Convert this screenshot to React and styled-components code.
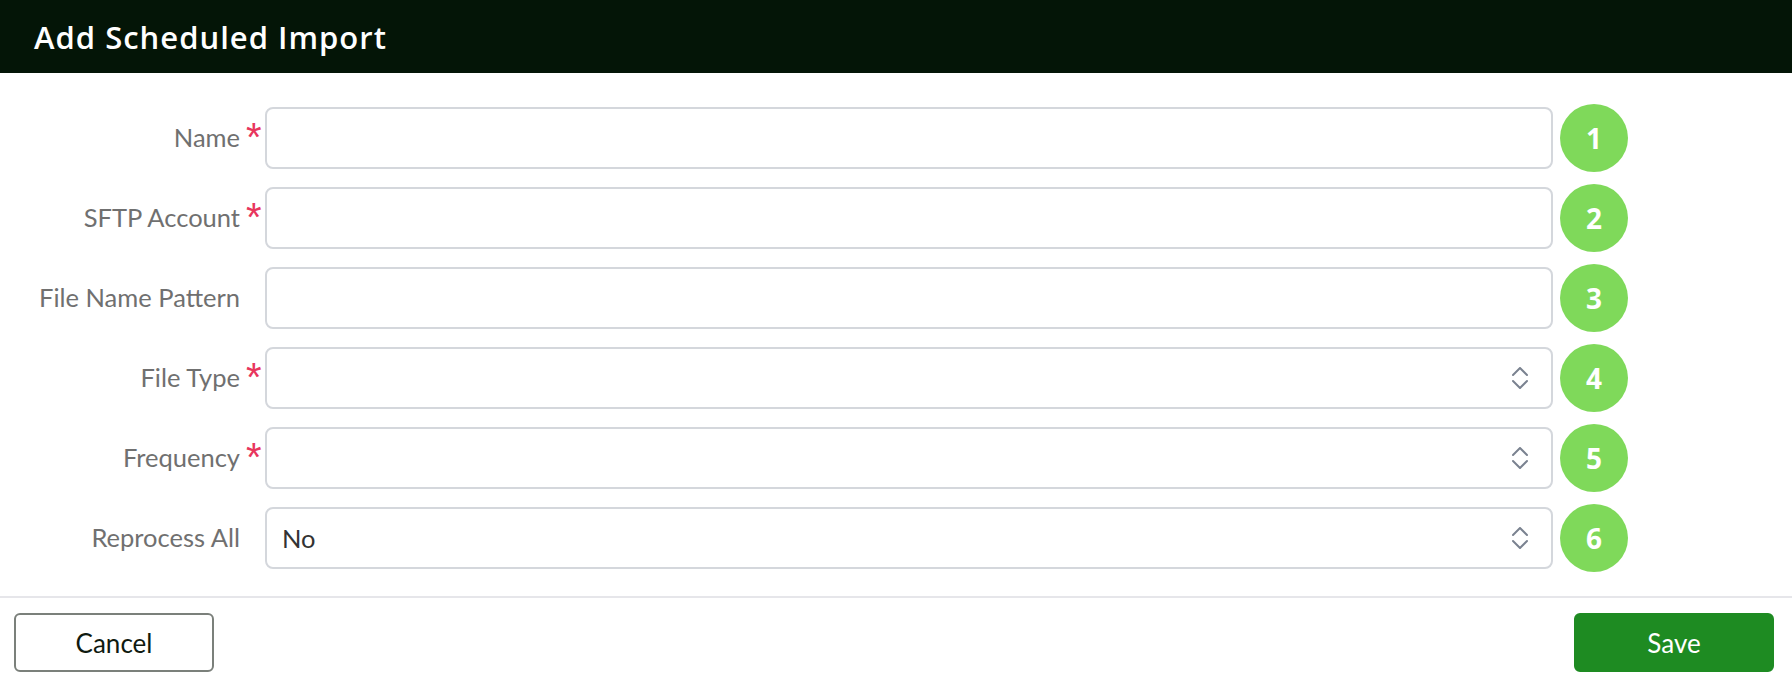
import React from 'react';
import styled, { createGlobalStyle } from 'styled-components';

const GlobalStyle = createGlobalStyle`
  html, body {
    margin: 0;
    padding: 0;
    background: #fff;
  }
  body {
    font-family: 'Lato', 'Liberation Sans', sans-serif;
  }
`;

const Modal = styled.div`
  width: 1792px;
  height: 682px;
  display: flex;
  flex-direction: column;
  background: #fff;
`;

const Header = styled.div`
  height: 73px;
  background: #041507;
  display: flex;
  align-items: center;
  padding-left: 34px;
  box-sizing: border-box;
  flex-shrink: 0;
`;

const Title = styled.h1`
  margin: 0;
  color: #fff;
  font-family: 'Open Sans', sans-serif;
  font-size: 31px;
  font-weight: 600;
  letter-spacing: 1px;
`;

const Form = styled.div`
  display: grid;
  grid-template-columns: 258px 1288px 68px;
  column-gap: 7px;
  row-gap: 12px;
  align-items: center;
  padding: 31px 0 24px;
  border-bottom: 2px solid #e6e6ea;
`;

const Label = styled.div`
  display: flex;
  justify-content: flex-end;
  align-items: center;
  color: #707070;
  font-size: 25.5px;
  margin-right: -7px;
  margin-top: -3px;
`;

const Asterisk = styled.span`
  width: 25px;
  height: 40px;
  box-sizing: border-box;
  padding-left: 6px;
  color: #e8365d;
  font-family: 'Liberation Sans', sans-serif;
  font-size: 40px;
  line-height: 1;
  font-weight: 400;
`;

const Field = styled.div`
  height: 62px;
  box-sizing: border-box;
  border: 2px solid #d4d7dc;
  border-radius: 8px;
  display: flex;
  align-items: center;
  justify-content: space-between;
  padding: 0 23px 0 15px;
  font-size: 25.5px;
  color: #333;
`;

const Badge = styled.div`
  width: 68px;
  height: 68px;
  border-radius: 50%;
  background: #7fd95a;
  color: #fff;
  display: flex;
  align-items: center;
  justify-content: center;
  font-family: 'Open Sans', sans-serif;
  font-weight: 700;
  font-size: 28px;
`;

const Footer = styled.div`
  display: flex;
  justify-content: space-between;
  padding: 15px 18px 0 14px;
`;

const Button = styled.button`
  width: 200px;
  height: 59px;
  box-sizing: border-box;
  border-radius: 6px;
  font-family: 'Lato', 'Liberation Sans', sans-serif;
  font-size: 26px;
  cursor: pointer;
  border: 2px solid ${p => (p.primary ? '#1e8b22' : '#7b807b')};
  background: ${p => (p.primary ? '#1e8b22' : '#fff')};
  color: ${p => (p.primary ? '#fff' : '#0f1a10')};
`;

const Chevrons = () => (
  <svg width="16" height="22" viewBox="0 0 16 22" fill="none" stroke="#7a8290" strokeWidth="2" strokeLinecap="round" strokeLinejoin="round">
    <path d="M1 8 L8 1 L15 8" />
    <path d="M1 14 L8 21 L15 14" />
  </svg>
);

const fields = [
  { label: 'Name', required: true },
  { label: 'SFTP Account', required: true },
  { label: 'File Name Pattern' },
  { label: 'File Type', required: true, select: true },
  { label: 'Frequency', required: true, select: true },
  { label: 'Reprocess All', select: true, value: 'No' },
];

export default function App() {
  return (
    <Modal>
      <GlobalStyle />
      <Header>
        <Title>Add Scheduled Import</Title>
      </Header>
      <Form>
        {fields.map((f, i) => (
          <React.Fragment key={f.label}>
            <Label>
              {f.label}
              <Asterisk>{f.required ? '*' : ''}</Asterisk>
            </Label>
            <Field>
              <span>{f.value || ''}</span>
              {f.select && <Chevrons />}
            </Field>
            <Badge>{i + 1}</Badge>
          </React.Fragment>
        ))}
      </Form>
      <Footer>
        <Button>Cancel</Button>
        <Button primary>Save</Button>
      </Footer>
    </Modal>
  );
}
